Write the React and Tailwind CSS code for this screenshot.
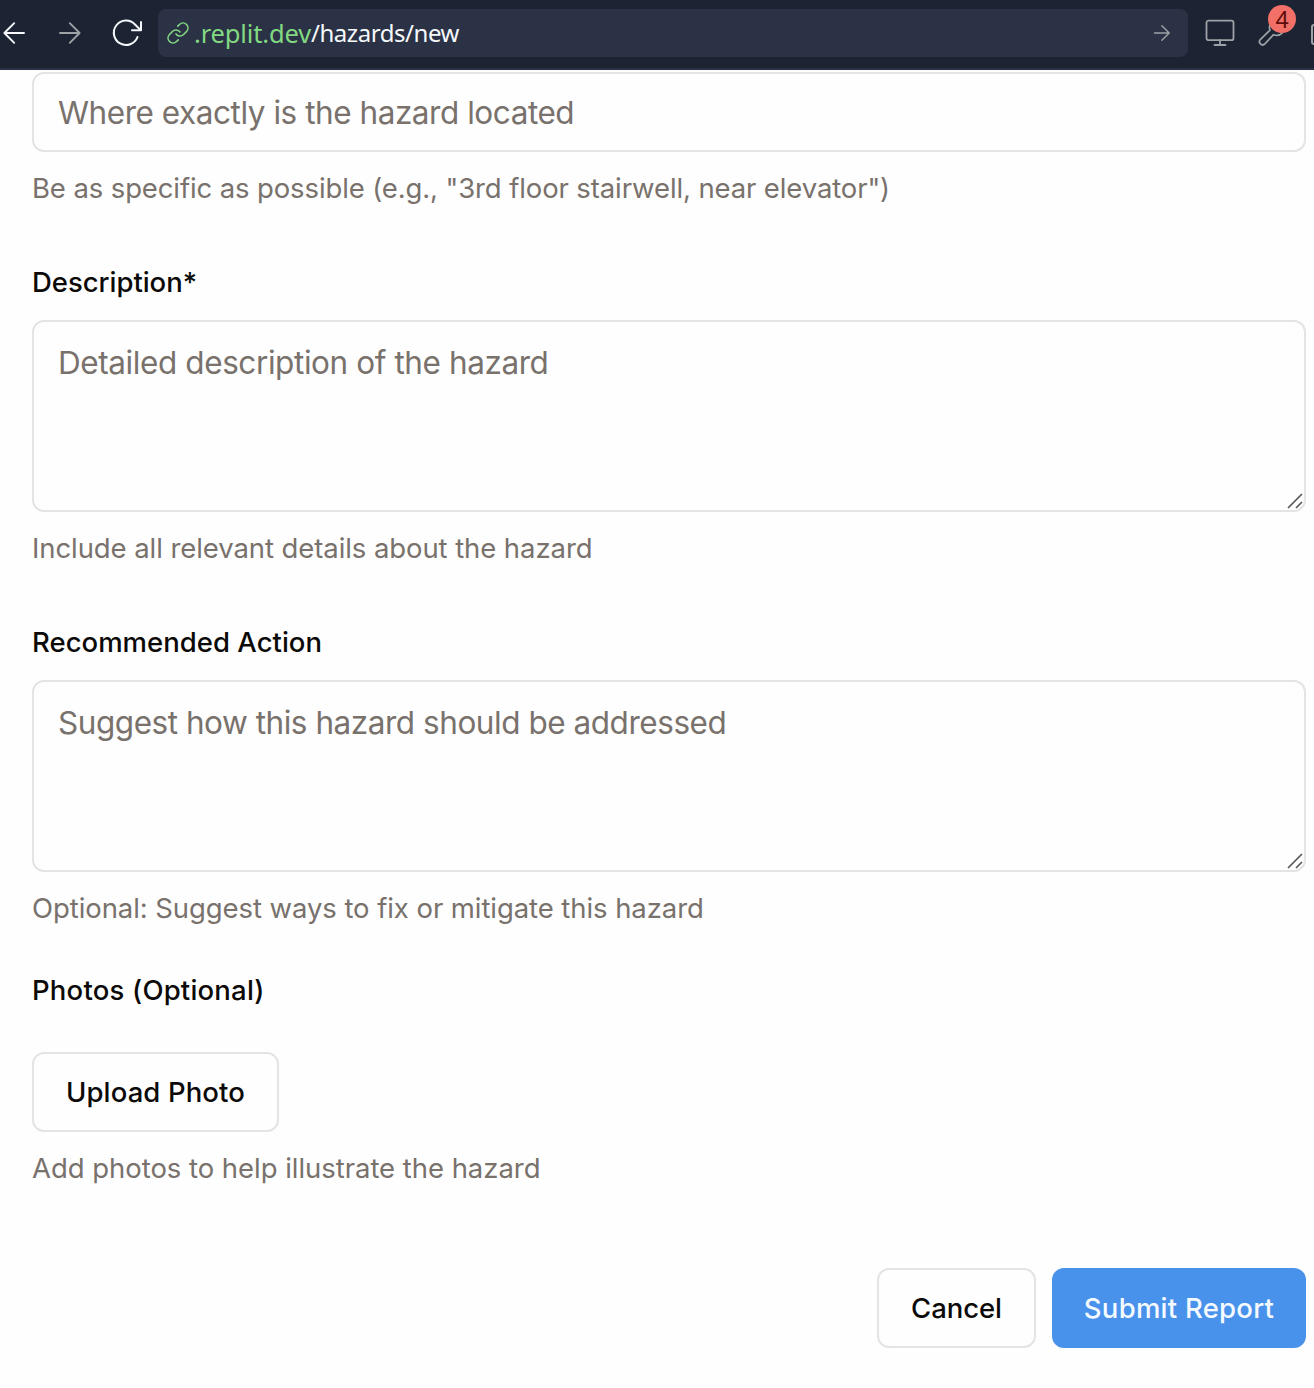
function ArrowIcon({ className, left = false }) {
  return (
    <svg className={className} viewBox="0 0 24 24" fill="none" stroke="currentColor" strokeWidth="1.9" strokeLinecap="round" strokeLinejoin="round">
      <path d={left ? 'M22 12H2.4M12.2 2.2 2.4 12l9.8 9.8' : 'M2 12h19.6M11.8 2.2 21.6 12l-9.8 9.8'} />
    </svg>
  );
}

function BrowserBar() {
  return (
    <header className="flex h-[70px] w-full items-start overflow-hidden border-b-2 border-[#2b3245] bg-[#1c2333] text-[#9da2a6]">
      <ArrowIcon left className="mt-[21px] ml-[2px] size-6 shrink-0 text-[#f5f9fc]" />
      <ArrowIcon className="mt-[21px] ml-8 size-6 shrink-0 text-[#9da2a6]" />
      <svg className="mt-[17px] ml-[28px] size-8 shrink-0 text-[#f5f9fc]" viewBox="0 0 32 32" fill="none" stroke="currentColor" strokeWidth="2" strokeLinecap="round" strokeLinejoin="round">
        <path d="M27.5 20A12.2 12.2 0 1 1 25 7.5L30.5 13" />
        <path d="M31 5v8.3h-9" />
      </svg>
      <div className="mt-[9px] ml-[16px] flex h-12 w-[1030px] shrink-0 items-center rounded-lg bg-[#2b3245] pl-2">
        <svg className="size-6 text-[#82d982]" viewBox="0 0 24 24" fill="none" stroke="currentColor" strokeWidth="1.6" strokeLinecap="round" strokeLinejoin="round">
          <path d="M10 13a5 5 0 0 0 7.54.54l3-3a5 5 0 0 0-7.07-7.07l-1.72 1.71" />
          <path d="M14 11a5 5 0 0 0-7.54-.54l-3 3a5 5 0 0 0 7.07 7.07l1.71-1.71" />
        </svg>
        <span className="ml-[4px] w-[117px] font-['Noto_Sans'] text-[25.5px] tracking-[-0.15px] whitespace-nowrap text-[#82d982]">.replit.dev</span>
        <span className="font-['Noto_Sans'] text-[24px] tracking-[-0.45px] whitespace-nowrap text-[#f5f9fc]">/hazards/new</span>
        <ArrowIcon className="mr-[17px] ml-auto size-[18px]" />
      </div>
      <svg className="mt-[18px] ml-[16px] h-[30px] w-8 shrink-0" viewBox="0 0 32 30" fill="none" stroke="currentColor" strokeWidth="1.8" strokeLinecap="round">
        <rect x="2.5" y="2.7" width="27" height="19.5" rx="2" />
        <path d="M16 22v5M10.5 27h11" />
      </svg>
      <div className="relative ml-[20px] h-[68px] w-10 shrink-0">
        <svg className="mt-[17px] ml-px size-8" viewBox="0 0 32 32" fill="none" stroke="currentColor" strokeWidth="1.7" strokeLinejoin="round">
          <path d="M13 7.5c-.7 2.1-.9 3.9 0 5.6L3.5 22.4a3.1 3.1 0 0 0 4.4 4.5l8.6-9.2c3.3 1.2 6.4.6 9-1.9" />
        </svg>
        <span className="absolute top-[5px] left-[12px] flex size-7 items-center justify-center rounded-full bg-[#f27068] font-['Noto_Sans'] text-[23px] leading-none text-[#600e0b]">4</span>
      </div>
      <div className="mt-[24px] ml-[15px] h-[21px] w-6 shrink-0 rounded-[3px] border-2 border-[#9da2a6]" />
    </header>
  );
}

function Hint({ children, className }) {
  return <p className={`mt-4 h-10 leading-10 text-[27.5px] whitespace-nowrap text-[#78716c] ${className}`}>{children}</p>;
}

function Label({ children, className }) {
  return <label className={`block h-7 leading-7 text-[27.5px] font-medium whitespace-nowrap text-[#0c0a09] ${className}`}>{children}</label>;
}

function TextArea({ children, className }) {
  return (
    <div className={`relative mt-6 h-48 rounded-xl border-2 border-[#e4e4e4] px-6 pt-[17px] text-[31.5px] leading-[48px] whitespace-nowrap text-[#78716c] ${className}`}>
      {children}
      <svg className="absolute right-0 -bottom-px size-[18px]" viewBox="0 0 18 18" stroke="#555" strokeWidth="1.6">
        <path d="M2 15 16 1M10 15l6-6" />
      </svg>
    </div>
  );
}

export default function App() {
  return (
    <div className="h-[1388px] w-[1314px] overflow-hidden bg-[#fefefe] font-['Inter',sans-serif]">
      <BrowserBar />
      <main className="pt-[2px] pr-2 pl-8">
        <div className="h-20 rounded-xl border-2 border-[#e4e4e4] px-6 text-[31.5px] leading-[78px] tracking-[-0.455px] whitespace-nowrap text-[#78716c]">
          Where exactly is the hazard located
        </div>
        <Hint className="tracking-[-0.12px]">Be as specific as possible (e.g., "3rd floor stairwell, near elevator")</Hint>
        <Label className="mt-[60px] tracking-[-0.03px]">Description*</Label>
        <TextArea className="tracking-[-0.41px]">Detailed description of the hazard</TextArea>
        <Hint className="tracking-[-0.08px]">Include all relevant details about the hazard</Hint>
        <Label className="mt-[60px] tracking-[0.02px]">Recommended Action</Label>
        <TextArea className="tracking-[-0.46px]">Suggest how this hazard should be addressed</TextArea>
        <Hint className="tracking-[-0.075px]">Optional: Suggest ways to fix or mitigate this hazard</Hint>
        <Label className="mt-[48px] tracking-[0.2px]">Photos (Optional)</Label>
        <button className="mt-12 flex h-20 w-[247px] items-center justify-center rounded-xl border-2 border-[#e4e4e4] pt-[2px] text-[27.5px] font-medium tracking-[0.11px] whitespace-nowrap text-[#0c0a09]">Upload Photo</button>
        <Hint className="tracking-[-0.04px]">Add photos to help illustrate the hazard</Hint>
        <div className="mt-20 flex justify-end gap-4">
          <button className="h-20 w-[159px] rounded-xl border-2 border-[#e4e4e4] pt-[2px] text-[27.5px] font-medium tracking-[-0.07px] text-[#0c0a09]">Cancel</button>
          <button className="h-20 w-[254px] rounded-xl bg-[#4992eb] pt-[2px] text-[27.5px] font-medium tracking-[0.25px] whitespace-nowrap text-[#f5faff]">Submit Report</button>
        </div>
      </main>
    </div>
  );
}
